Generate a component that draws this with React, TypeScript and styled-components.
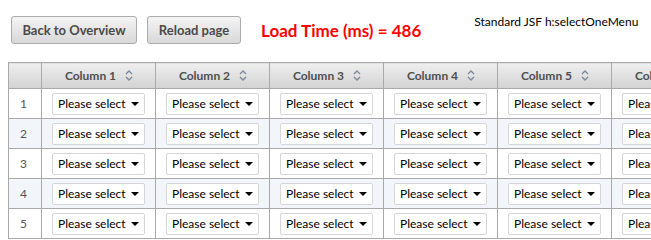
import React from 'react';
import styled, { createGlobalStyle } from 'styled-components';

const Global = createGlobalStyle`
  html, body { margin: 0; padding: 0; background: #fff; overflow: hidden; }
  body { font-family: Lato, "Open Sans", sans-serif; }
`;

const Page = styled.div`
  padding: 16px 0 0 8px;
  width: 900px;
`;

const Toolbar = styled.div`
  display: flex;
  align-items: flex-start;
  gap: 10px;
  padding-left: 3px;
  height: 28px;
`;

const Button = styled.button<{ $w: number }>`
  box-sizing: border-box;
  width: ${(p) => p.$w}px;
  height: 28px;
  padding: 0;
  border: 1px solid #ababab;
  border-radius: 3px;
  background: linear-gradient(#f4f4f4, #d8d8d8);
  font-family: Lato, sans-serif;
  font-weight: bold;
  font-size: 13px;
  color: #4a4a4a;
  cursor: pointer;
`;

const LoadTime = styled.span`
  margin-left: 10px;
  line-height: 30px;
  font-family: Lato, sans-serif;
  font-weight: bold;
  font-size: 17px;
  color: #ff0000;
`;

const Caption = styled.span`
  margin-left: 43px;
  margin-top: -2px;
  font-size: 12px;
  color: #000;
`;

const Table = styled.table`
  margin-top: 18px;
  border-collapse: collapse;
  table-layout: fixed;
  width: 718px;
`;

const HeadCell = styled.th`
  height: 25px;
  padding: 0;
  border: 1px solid #a9a9a9;
  background: linear-gradient(#efefef, #d2d2d2);
  font-size: 12px;
  font-weight: bold;
  color: #4f4f4f;
  text-align: center;
`;

const HeadInner = styled.span`
  display: inline-flex;
  align-items: center;
  gap: 9px;
  padding-left: 1px;
`;

const Row = styled.tr<{ $alt: boolean }>`
  background: ${(p) => (p.$alt ? '#f2f5fa' : '#ffffff')};
`;

const NumCell = styled.td`
  height: 29px;
  padding: 0 0 0 11px;
  border: 1px solid #a9a9a9;
  font-size: 12px;
  color: #555;
`;

const Cell = styled.td`
  height: 29px;
  padding: 0 0 0 10px;
  border: 1px solid #a9a9a9;
`;

const Select = styled.div`
  display: flex;
  align-items: center;
  justify-content: space-between;
  box-sizing: border-box;
  width: 93px;
  height: 22px;
  padding: 0 5px 0 5px;
  border: 1px solid #d6d6d6;
  border-radius: 2px;
  background: #fff;
  font-size: 12px;
  color: #000;
`;

const SortIcon = () => (
  <svg width="8" height="11" viewBox="0 0 8 11">
    <path d="M1 4 L4 1 L7 4 M1 7 L4 10 L7 7" fill="none" stroke="#7c8798" strokeWidth="1.3" />
  </svg>
);

const Arrow = () => (
  <svg width="8" height="4" viewBox="0 0 8 4">
    <path d="M0 0 H8 L4 4 Z" fill="#000" />
  </svg>
);

const cols = [1, 2, 3, 4, 5, 6];
const rows = [1, 2, 3, 4, 5];

export default function App() {
  return (
    <>
      <Global />
      <Page>
        <Toolbar>
          <Button $w={126}>Back to Overview</Button>
          <Button $w={94}>Reload page</Button>
          <LoadTime>Load Time (ms) = 486</LoadTime>
          <Caption>Standard JSF h:selectOneMenu</Caption>
        </Toolbar>
        <Table>
          <colgroup>
            <col style={{ width: 33 }} />
            {cols.map((c) => (
              <col key={c} style={{ width: 114 }} />
            ))}
          </colgroup>
          <thead>
            <tr>
              <HeadCell />
              {cols.map((c) => (
                <HeadCell key={c}>
                  <HeadInner>
                    Column {c}
                    <SortIcon />
                  </HeadInner>
                </HeadCell>
              ))}
            </tr>
          </thead>
          <tbody>
            {rows.map((r) => (
              <Row key={r} $alt={r % 2 === 0}>
                <NumCell>{r}</NumCell>
                {cols.map((c) => (
                  <Cell key={c}>
                    <Select>
                      <span>Please select</span>
                      <Arrow />
                    </Select>
                  </Cell>
                ))}
              </Row>
            ))}
          </tbody>
        </Table>
      </Page>
    </>
  );
}
